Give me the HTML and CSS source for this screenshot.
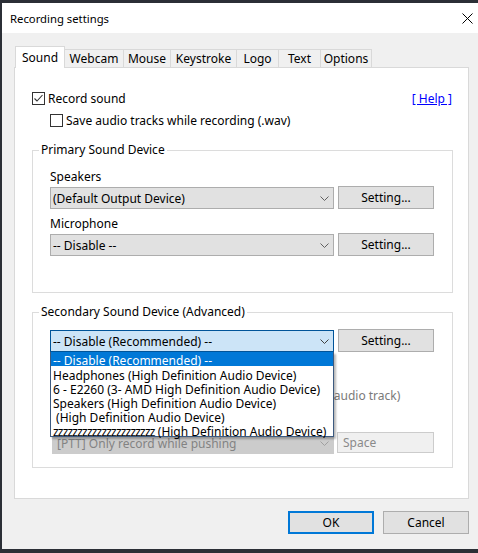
FILE: index.html
```html
<!DOCTYPE html>
<html>
<head>
<meta charset="utf-8">
<title>Recording settings</title>
<link rel="stylesheet" href="styles.css">
</head>
<body>
<div class="window">
  <div class="titlebar">
    <span class="title">Recording settings</span>
    <svg class="close" width="11" height="11" viewBox="0 0 11 11"><path d="M0.5 0.5L10.5 10.5M10.5 0.5L0.5 10.5" stroke="#000" stroke-width="1" fill="none"/></svg>
  </div>
  <div class="client">
    <div class="tabs">
      <div class="tab active t-sound">Sound</div>
      <div class="tab t-webcam">Webcam</div>
      <div class="tab t-mouse">Mouse</div>
      <div class="tab t-key">Keystroke</div>
      <div class="tab t-logo">Logo</div>
      <div class="tab t-text">Text</div>
      <div class="tab t-options">Options</div>
    </div>
    <div class="panel">
      <div class="row first-row">
        <div class="check">
          <svg class="box" width="13" height="13" viewBox="0 0 13 13"><rect x="0.5" y="0.5" width="12" height="12" fill="#fff" stroke="#333"/><polyline points="2.5,6.5 5,9 10.5,3" fill="none" stroke="#333" stroke-width="1.1"/></svg>
          <span>Record sound</span>
        </div>
        <a class="help">[ Help ]</a>
      </div>
      <div class="row check sub">
        <svg class="box" width="13" height="13" viewBox="0 0 13 13"><rect x="0.5" y="0.5" width="12" height="12" fill="#fff" stroke="#333"/></svg>
        <span>Save audio tracks while recording (.wav)</span>
      </div>

      <fieldset class="group g1">
        <legend>Primary Sound Device</legend>
        <div class="label">Speakers</div>
        <div class="ctrl-row">
          <div class="combo"><span>(Default Output Device)</span><svg class="chev" width="9" height="5" viewBox="0 0 9 5"><polyline points="0.5,0.5 4.5,4.5 8.5,0.5" fill="none" stroke="#606060"/></svg></div>
          <div class="btn setting">Setting...</div>
        </div>
        <div class="label gap">Microphone</div>
        <div class="ctrl-row">
          <div class="combo"><span>-- Disable --</span><svg class="chev" width="9" height="5" viewBox="0 0 9 5"><polyline points="0.5,0.5 4.5,4.5 8.5,0.5" fill="none" stroke="#606060"/></svg></div>
          <div class="btn setting">Setting...</div>
        </div>
      </fieldset>

      <fieldset class="group g2">
        <legend>Secondary Sound Device (Advanced)</legend>
        <div class="ctrl-row">
          <div class="combo focus"><span>-- Disable (Recommended) --</span><svg class="chev" width="9" height="5" viewBox="0 0 9 5"><polyline points="0.5,0.5 4.5,4.5 8.5,0.5" fill="none" stroke="#404040"/></svg>
            <ul class="dropdown">
              <li class="sel">-- Disable (Recommended) --</li>
              <li>Headphones (High Definition Audio Device)</li>
              <li>6 - E2260 (3- AMD High Definition Audio Device)</li>
              <li>Speakers (High Definition Audio Device)</li>
              <li> (High Definition Audio Device)</li>
              <li><span class="zs">zzzzzzzzzzzzzzzzzzzzz</span> (High Definition Audio Device)</li>
            </ul>
          </div>
          <div class="btn setting">Setting...</div>
        </div>
        <div class="row check disabled track">
          <svg class="box" width="13" height="13" viewBox="0 0 13 13"><rect x="0.5" y="0.5" width="12" height="12" fill="#fff" stroke="#bcbcbc"/></svg>
          <span>Merge it with the primary sound device (as one audio track)</span>
        </div>
        <div class="ptt-row">
          <div class="combo off"><span>[PTT] Only record while pushing</span><svg class="chev" width="9" height="5" viewBox="0 0 9 5"><polyline points="0.5,0.5 4.5,4.5 8.5,0.5" fill="none" stroke="#a0a0a0"/></svg></div>
          <div class="field off">Space</div>
        </div>
      </fieldset>
    </div>
    <div class="footer">
      <div class="btn ok">OK</div>
      <div class="btn cancel">Cancel</div>
    </div>
  </div>
</div>
</body>
</html>
```

FILE: styles.css
```css
* { box-sizing: border-box; }
html, body { margin: 0; padding: 0; }
body {
  background: #2b2f36;
  font-family: "Noto Sans", "Liberation Sans", sans-serif;
  font-size: 12px;
  color: #000;
  height: 553px;
  overflow: hidden;
}
.window {
  margin: 3px 0 0 2px;
  width: 476px;
  height: 546px;
  background: #f0f0f0;
  display: flex;
  flex-direction: column;
}
.titlebar {
  height: 30px;
  flex: none;
  background: #fff;
  display: flex;
  align-items: center;
  justify-content: space-between;
  padding: 0 5px 0 8px;
}
.title { font-size: 11.3px; }
.close { display: block; }

.client { flex: 1; padding: 13px 0 0 12px; }

.tabs {
  display: flex;
  align-items: flex-end;
  height: 21px;
  padding-left: 1px;
}
.tab {
  height: 18px;
  border: 1px solid #d9d9d9;
  border-bottom: none;
  margin-left: -1px;
  background: #f0f0f0;
  display: flex;
  align-items: center;
  justify-content: center;
  line-height: 15px;
}
.tab.active {
  height: 22px;
  margin-left: 0;
  margin-bottom: -1px;
  background: #fff;
  position: relative;
  z-index: 1;
}
.t-sound { width: 50px; }
.t-webcam { width: 60px; }
.t-mouse { width: 48px; }
.t-key { width: 67px; }
.t-logo { width: 43px; }
.t-text { width: 43px; }
.t-options { width: 52px; }

.panel {
  width: 455px;
  height: 432px;
  border: 1px solid #d9d9d9;
  background: #fff;
  padding: 23px 15px 0 17px;
}
.row { display: flex; align-items: center; height: 14px; line-height: 15px; }
.first-row { justify-content: space-between; }
.check { display: flex; align-items: center; gap: 3px; white-space: nowrap; }
.box { display: block; flex: none; }
.sub { margin: 8px 0 0 18px; }
.help { color: #0000ff; text-decoration: underline; margin-right: 1px; }

.group {
  margin: 0;
  border: 1px solid #dcdcdc;
  min-width: 0;
}
.group legend {
  padding: 0 2px;
  margin-left: -11px;
  line-height: 16px;
}
.g1 { margin-top: 15px; padding: 11px 0 36px 17px; }
.g2 { margin-top: 11px; padding: 9px 0 13px 17px; }

.label { line-height: 15px; height: 14px; }
.label.gap { margin-top: 7px; }
.ctrl-row {
  display: flex;
  align-items: flex-start;
  gap: 4px;
  margin-top: 3px;
  height: 23px;
}
.g2 .ctrl-row { margin-top: 0; }
.combo {
  width: 284px;
  height: 22px;
  margin-top: 1px;
  background: #e1e1e1;
  border: 1px solid #adadad;
  display: flex;
  align-items: center;
  justify-content: space-between;
  padding: 0 4px 0 2px;
  white-space: nowrap;
  position: relative;
}
.chev { display: block; flex: none; }
.combo.focus { background: #cce4f7; border-color: #005499; }
.btn {
  background: #e1e1e1;
  border: 1px solid #adadad;
  display: flex;
  align-items: center;
  justify-content: center;
}
.setting { width: 96px; height: 23px; }

.dropdown {
  position: absolute;
  left: -1px;
  top: 21px;
  width: 284px;
  margin: 0;
  padding: 0;
  list-style: none;
  background: #fff;
  border: 1px solid #3c5a80;
  border-top: none;
  box-shadow: 2px 2px 2px rgba(0, 0, 0, 0.28);
  z-index: 5;
}
.dropdown li {
  height: 14px;
  line-height: 14px;
  padding: 3px 0 0 2px;
  white-space: pre;
}
.dropdown li.sel { background: #0078d7; color: #fff; padding-top: 2px; }
.zs { letter-spacing: -0.8px; }

.disabled { color: #7a7a7a; }
.track { margin-top: 36px; }

.ptt-row {
  display: flex;
  gap: 3px;
  margin-top: 30px;
  height: 22px;
}
.combo.off {
  margin: 0 0 0 2px;
  width: 282px;
  background: #cccccc;
  border-color: #cccccc;
  color: #838383;
  padding-left: 4px;
}
.field.off {
  width: 97px;
  height: 21px;
  border: 1px solid #cccccc;
  background: #f0f0f0;
  color: #8a8a8a;
  padding-left: 5px;
  line-height: 19px;
}

.footer {
  width: 455px;
  display: flex;
  justify-content: flex-end;
  gap: 9px;
  margin-top: 12px;
}
.ok { width: 86px; height: 23px; border: 2px solid #0078d7; }
.cancel { width: 86px; height: 23px; }
```
